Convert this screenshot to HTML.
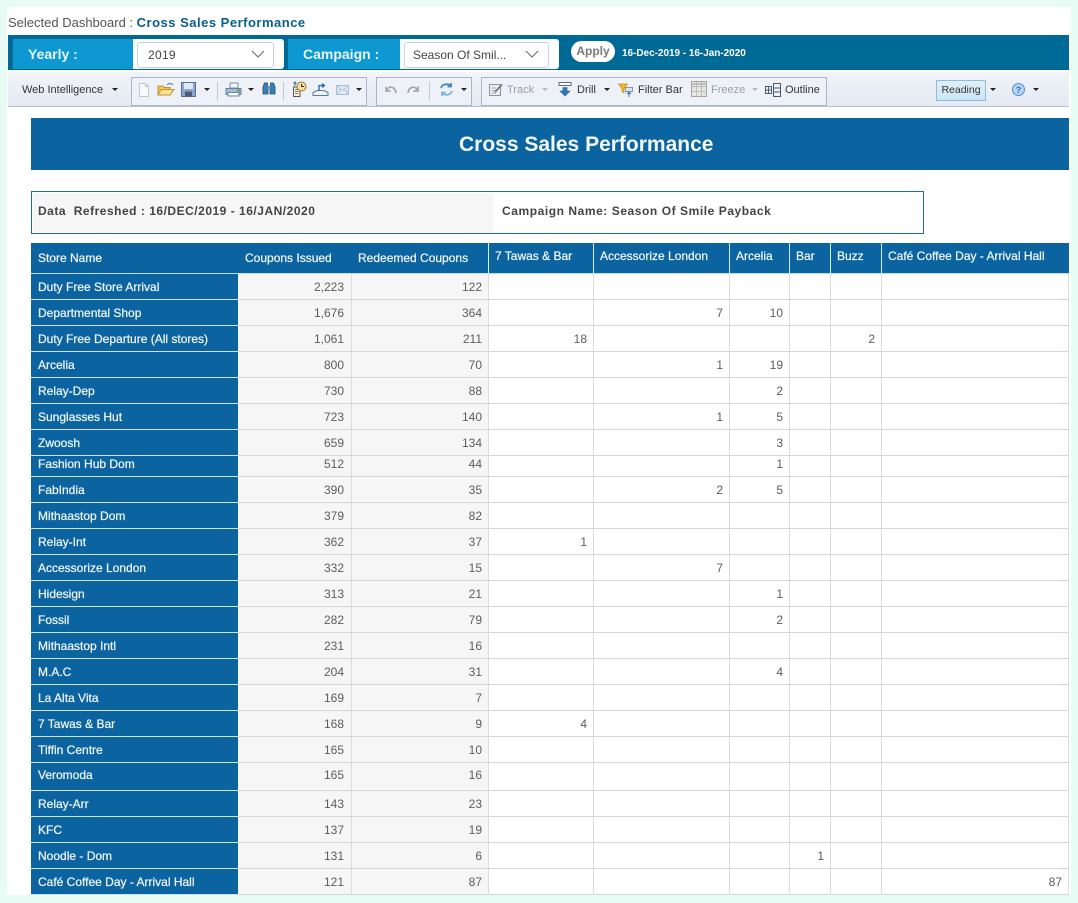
<!DOCTYPE html>
<html><head><meta charset="utf-8"><title>Cross Sales Performance</title>
<style>
*{box-sizing:border-box}
html,body{margin:0;padding:0}
body{width:1078px;height:903px;position:relative;overflow:hidden;background:#e7fcf5;font-family:"Liberation Sans",sans-serif;color:#444}
.a{position:absolute;white-space:nowrap}
.lbl{background:#0d98d2;color:#e8f6fc;font-weight:bold;font-size:14px;line-height:30px}
.sel{background:#fff;border:1px solid #c9d3d8;border-radius:3px;font-size:12px;color:#444;line-height:25px;padding-left:10px;letter-spacing:.3px}
.t{font-size:11px;color:#333;line-height:14px}
.g{color:#9a9fa6}
.grp{border:1px solid #aab6c6;background:#eef1f7;height:29px;top:77px}
.ar{width:0;height:0;border-left:3px solid transparent;border-right:3px solid transparent;border-top:3px solid #222}
.sp{width:1px;height:19px;top:82px;background:#c3cad5}
svg{position:absolute;overflow:visible}
table{position:absolute;left:31px;top:243px;width:1038px;table-layout:fixed;border-collapse:separate;border-spacing:0;font-size:12px;color:#5c5c5c}
th{background:#0b639f;color:#eef5fa;font-weight:normal;text-align:left;height:31px;padding:0 0 0 7px;white-space:nowrap;border-bottom:1px solid #bfdcec;-webkit-text-stroke:.25px #eef5fa;line-height:14px}
th.r{border-left:1px solid #d9ebf5;padding:0 0 5px 6px}
td{height:26px;padding:0 6px 0 0;text-align:right;border-bottom:1px solid #d6d6d6;border-left:1px solid #dcdcdc;line-height:14px;white-space:nowrap}
td:first-child{background:#0b639f;color:#eef5fa;text-align:left;padding-left:7px;border-bottom:1px solid #cfe4f0;border-left:0;-webkit-text-stroke:.25px #eef5fa}
td:nth-child(2),td:nth-child(3){background:#f6f6f6}
td:nth-child(2){padding-right:7px;border-left:0}
td:last-child{border-right:1px solid #dcdcdc;padding-right:6px}
.s td{height:21px;padding-bottom:5px}
.l td{height:28px;padding-bottom:3px}
</style></head>
<body>
<div class="a" style="left:7px;top:7px;width:1064px;height:888px;background:#fff"></div>
<div class="a" style="left:8px;top:15px;font-size:13px;line-height:15px;color:#555">Selected Dashboard : <b style="color:#07608c;letter-spacing:.5px">Cross Sales Performance</b></div>

<div class="a" style="left:8px;top:35px;width:1061px;height:35px;background:#006a96"></div>
<div class="a lbl" style="left:13px;top:39px;width:120px;height:30px;padding-left:15px">Yearly :</div>
<div class="a" style="left:133px;top:39px;width:151px;height:30px;background:#fff;border-radius:0 3px 3px 0"></div>
<div class="a sel" style="left:137px;top:42px;width:137px;height:26px">2019</div>
<svg style="left:251px;top:50px" width="14" height="9"><path d="M1 1L7 7L13 1" fill="none" stroke="#666" stroke-width="1"/></svg>
<div class="a lbl" style="left:288px;top:39px;width:112px;height:30px;padding-left:15px">Campaign :</div>
<div class="a" style="left:400px;top:39px;width:159px;height:30px;background:#fff;border-radius:0 3px 3px 0"></div>
<div class="a sel" style="left:404px;top:42px;width:145px;height:26px;padding-left:8px;letter-spacing:0">Season Of Smil...</div>
<svg style="left:525px;top:50px" width="14" height="9"><path d="M1 1L7 7L13 1" fill="none" stroke="#666" stroke-width="1"/></svg>
<div class="a" style="left:571px;top:41px;width:44px;height:21px;background:#fff;border-radius:11px;text-align:center;font-size:12px;font-weight:bold;color:#7a7a7a;line-height:20px">Apply</div>
<div class="a" style="left:622px;top:48px;font-size:10px;font-weight:bold;color:#fff;line-height:12px;letter-spacing:-.03px">16-Dec-2019 - 16-Jan-2020</div>

<div class="a" style="left:8px;top:72px;width:1061px;height:35px;background:linear-gradient(#f1f4f8,#e4e9f3);border-bottom:1px solid #b9c2ce"></div>
<div class="a t" style="left:22px;top:83px">Web Intelligence</div>
<div class="a ar" style="left:112px;top:88px"></div>

<div class="a grp" style="left:131px;width:236px"></div>
<div class="a grp" style="left:376px;width:96px"></div>
<div class="a grp" style="left:481px;width:346px"></div>

<!-- new -->
<svg style="left:138px;top:83px" width="12" height="14"><path d="M1.500 .5H7.500L10.500 3.500V13.500H1.500Z M7.500 .5V3.500H10.500" fill="#fafafa" stroke="#c4c8cd"/></svg>
<!-- open -->
<svg style="left:157px;top:82px" width="18" height="15"><path d="M1 13V4H6L7.500 5.500H13V13Z" fill="#f2c557" stroke="#c09433"/><path d="M1 13L4 7.500H17L13 13Z" fill="#fbe08c" stroke="#c09433"/><path d="M10 3Q13 0 16 3" fill="none" stroke="#5b93c2" stroke-width="1.200"/></svg>
<!-- save -->
<svg style="left:181px;top:82px" width="15" height="15"><rect x=".5" y=".5" width="14" height="14" fill="#8aa6d2" stroke="#5a6f96"/><rect x="3" y="1" width="9" height="6" fill="#e4e9f0"/><rect x="4" y="9.500" width="7" height="5" fill="#4c5b76"/></svg>
<div class="a ar" style="left:204px;top:88px"></div>
<div class="a sp" style="left:217px"></div>
<!-- print -->
<svg style="left:225px;top:82px" width="17" height="15"><path d="M5 1H13V6H5Z" fill="#f1f4f8" stroke="#8291a5"/><path d="M1 6.500H16V12.500H1Z" fill="#a5bcd8" stroke="#67809e"/><path d="M3 10.500H14V14H3Z" fill="#f6f8fa" stroke="#6f859d"/><rect x="12" y="7.500" width="3" height="2" fill="#5da548"/></svg>
<div class="a ar" style="left:248px;top:88px"></div>
<!-- binoculars -->
<svg style="left:262px;top:82px" width="14" height="14"><path d="M2.500 1H5.500V5H6V12H1V5Z M8.500 1H11.500L13 5V12H8V5H8.500Z" fill="#3a7fb0" stroke="#1f4f78" stroke-width=".8"/><rect x="5.500" y="4" width="3" height="3" fill="#6b97bb"/></svg>
<div class="a sp" style="left:283px"></div>
<!-- schedule -->
<svg style="left:291px;top:81px" width="16" height="17"><path d="M2.500 6H9V15.500H2.500Z" fill="#f7f3df" stroke="#555"/><path d="M4 8.500H7.500M4 10.500H7.500M4 12.500H7.500" stroke="#555" stroke-width=".8"/><circle cx="10.500" cy="5.500" r="4.500" fill="#f6dea0" stroke="#9a7a30"/><path d="M10.500 3V5.500H13" fill="none" stroke="#333"/><path d="M4 5V1M2.500 2.500L4 1L5.500 2.500" fill="none" stroke="#2b6ca3"/></svg>
<!-- publish -->
<svg style="left:312px;top:82px" width="17" height="15"><path d="M1 13.500H16V10.500L12 8.500H5L1 10.500Z" fill="#eef1f6" stroke="#5a7a9a"/><path d="M7 9V3.500H12M10 1.500L12.500 3.500L10 5.500" fill="none" stroke="#2a6a9f" stroke-width="1.300"/></svg>
<!-- mail -->
<svg style="left:336px;top:85px" width="13" height="10"><rect x=".5" y=".5" width="12" height="9" fill="#dfe9f5" stroke="#a8bdd6"/><path d="M.5 .5L6.500 5.500L12.500 .5M.5 9.500L4.500 4M12.500 9.500L8.500 4" fill="none" stroke="#a8bdd6" stroke-width=".8"/></svg>
<div class="a ar" style="left:356px;top:88px"></div>

<!-- undo / redo -->
<svg style="left:384px;top:85px" width="13" height="10"><path d="M2 1.500V6H6.500M2.500 5.500C4.500 .5 11 1 12 8" fill="none" stroke="#a2a7ae" stroke-width="1.700"/></svg>
<svg style="left:407px;top:85px" width="13" height="10"><path d="M11 1.500V6H6.500M10.500 5.500C8.500 .5 2 1 1 8" fill="none" stroke="#a2a7ae" stroke-width="1.700"/></svg>
<div class="a sp" style="left:429px"></div>
<!-- refresh -->
<svg style="left:439px;top:82px" width="15" height="15"><path d="M2 6C3 2 9 1 12 4M12 1V4.500H8.500" fill="none" stroke="#3c85c2" stroke-width="1.700"/><path d="M13 9C12 13 6 14 3 11M3 14V10.500H6.500" fill="none" stroke="#7ab4df" stroke-width="1.700"/></svg>
<div class="a ar" style="left:461px;top:88px"></div>

<!-- track -->
<svg style="left:488px;top:82px" width="16" height="15"><rect x="1.500" y="2.500" width="11" height="11" fill="#eceef1" stroke="#8e9299"/><path d="M3.500 6H8M3.500 8.500H7M3.500 11H8" stroke="#a5a8ae"/><path d="M7 10L14 2.500" stroke="#777" stroke-width="1.800"/></svg>
<div class="a t g" style="left:507px;top:83px">Track</div>
<div class="a ar" style="left:542px;top:88px;border-top-color:#b5bac2"></div>
<!-- drill -->
<svg style="left:558px;top:82px" width="14" height="15"><path d="M1 .5H13V3.500H1Z" fill="#fff" stroke="#5e6a78"/><path d="M5 5.500H9V9H12L7 14L2 9H5Z" fill="#2d78bd" stroke="#1f5c96" stroke-width=".6"/></svg>
<div class="a t" style="left:577px;top:83px">Drill</div>
<div class="a ar" style="left:604px;top:88px"></div>
<!-- filter -->
<svg style="left:618px;top:83px" width="16" height="15"><path d="M.5 1H9.500L6 5.500V10L4 8.500V5.500Z" fill="#f2b92c" stroke="#c58d13" stroke-width=".7"/><rect x="7.500" y="4.500" width="7" height="4" fill="#dce6f2" stroke="#70849b" stroke-width=".8"/><path d="M11 9V14M9 11L11 9L13 11" fill="none" stroke="#3f6f99"/></svg>
<div class="a t" style="left:638px;top:83px">Filter Bar</div>
<!-- freeze -->
<svg style="left:691px;top:81px" width="16" height="16"><rect x=".5" y=".5" width="15" height="15" fill="#e7e4e1" stroke="#a5a5a5"/><path d="M5.500 1V15M10.500 1V15M1 5.500H15M1 10.500H15" stroke="#bdbdbd"/><path d="M1 3H15" stroke="#9c9c9c"/></svg>
<div class="a t g" style="left:711px;top:83px">Freeze</div>
<div class="a ar" style="left:752px;top:88px;border-top-color:#b5bac2"></div>
<!-- outline -->
<svg style="left:765px;top:83px" width="16" height="14"><rect x=".5" y="3.500" width="6" height="7" fill="none" stroke="#4c5d72"/><path d="M1 7H6M3.500 4V10" stroke="#4c5d72"/><rect x="8.500" y=".5" width="7" height="13" fill="none" stroke="#4c5d72"/><path d="M9 5H15M9 9H15" stroke="#4c5d72"/></svg>
<div class="a t" style="left:785px;top:83px">Outline</div>

<div class="a" style="left:936px;top:80px;width:50px;height:21px;background:linear-gradient(#dff0fa,#cce6f5);border:1px solid #8fbcd8;text-align:center;font-size:10.5px;line-height:18px;color:#333">Reading</div>
<div class="a ar" style="left:990px;top:88px"></div>
<svg style="left:1012px;top:83px" width="13" height="13"><circle cx="6.500" cy="6.500" r="6" fill="#b9d5f2" stroke="#4d8fd6"/><text x="6.500" y="10" font-size="9" font-weight="bold" text-anchor="middle" fill="#2f74c0" font-family="Liberation Sans">?</text></svg>
<div class="a ar" style="left:1033px;top:88px"></div>

<div class="a" style="left:31px;top:118px;width:1038px;height:52px;background:#0b639f;color:#f2f8fc;font-size:21px;font-weight:bold;line-height:54px;padding-left:428px">Cross Sales Performance</div>

<div class="a" style="left:31px;top:191px;width:893px;height:43px;border:1px solid #1a6f98;background:#fff"></div>
<div class="a" style="left:33px;top:193px;width:461px;height:39px;background:#f6f6f6"></div>
<div class="a" style="left:38px;top:204px;font-size:12px;font-weight:bold;color:#444;line-height:15px;letter-spacing:.51px;white-space:pre">Data  Refreshed : 16/DEC/2019 - 16/JAN/2020</div>
<div class="a" style="left:502px;top:204px;font-size:12px;font-weight:bold;color:#444;line-height:15px;letter-spacing:.56px">Campaign Name: Season Of Smile Payback</div>

<table>
<colgroup><col style="width:207px"><col style="width:113px"><col style="width:137px"><col style="width:105px"><col style="width:136px"><col style="width:60px"><col style="width:41px"><col style="width:51px"><col style="width:188px"></colgroup>
<tr><th>Store Name</th><th>Coupons Issued</th><th>Redeemed Coupons</th><th class="r">7 Tawas &amp; Bar</th><th class="r">Accessorize London</th><th class="r">Arcelia</th><th class="r">Bar</th><th class="r">Buzz</th><th class="r">Café Coffee Day - Arrival Hall</th></tr>
<tr><td>Duty Free Store Arrival</td><td>2,223</td><td>122</td><td></td><td></td><td></td><td></td><td></td><td></td></tr>
<tr><td>Departmental Shop</td><td>1,676</td><td>364</td><td></td><td>7</td><td>10</td><td></td><td></td><td></td></tr>
<tr><td>Duty Free Departure (All stores)</td><td>1,061</td><td>211</td><td>18</td><td></td><td></td><td></td><td>2</td><td></td></tr>
<tr><td>Arcelia</td><td>800</td><td>70</td><td></td><td>1</td><td>19</td><td></td><td></td><td></td></tr>
<tr><td>Relay-Dep</td><td>730</td><td>88</td><td></td><td></td><td>2</td><td></td><td></td><td></td></tr>
<tr><td>Sunglasses Hut</td><td>723</td><td>140</td><td></td><td>1</td><td>5</td><td></td><td></td><td></td></tr>
<tr><td>Zwoosh</td><td>659</td><td>134</td><td></td><td></td><td>3</td><td></td><td></td><td></td></tr>
<tr class="s"><td>Fashion Hub Dom</td><td>512</td><td>44</td><td></td><td></td><td>1</td><td></td><td></td><td></td></tr>
<tr><td>FabIndia</td><td>390</td><td>35</td><td></td><td>2</td><td>5</td><td></td><td></td><td></td></tr>
<tr><td>Mithaastop Dom</td><td>379</td><td>82</td><td></td><td></td><td></td><td></td><td></td><td></td></tr>
<tr><td>Relay-Int</td><td>362</td><td>37</td><td>1</td><td></td><td></td><td></td><td></td><td></td></tr>
<tr><td>Accessorize London</td><td>332</td><td>15</td><td></td><td>7</td><td></td><td></td><td></td><td></td></tr>
<tr><td>Hidesign</td><td>313</td><td>21</td><td></td><td></td><td>1</td><td></td><td></td><td></td></tr>
<tr><td>Fossil</td><td>282</td><td>79</td><td></td><td></td><td>2</td><td></td><td></td><td></td></tr>
<tr><td>Mithaastop Intl</td><td>231</td><td>16</td><td></td><td></td><td></td><td></td><td></td><td></td></tr>
<tr><td>M.A.C</td><td>204</td><td>31</td><td></td><td></td><td>4</td><td></td><td></td><td></td></tr>
<tr><td>La Alta Vita</td><td>169</td><td>7</td><td></td><td></td><td></td><td></td><td></td><td></td></tr>
<tr><td>7 Tawas &amp; Bar</td><td>168</td><td>9</td><td>4</td><td></td><td></td><td></td><td></td><td></td></tr>
<tr><td>Tiffin Centre</td><td>165</td><td>10</td><td></td><td></td><td></td><td></td><td></td><td></td></tr>
<tr class="l"><td>Veromoda</td><td>165</td><td>16</td><td></td><td></td><td></td><td></td><td></td><td></td></tr>
<tr><td>Relay-Arr</td><td>143</td><td>23</td><td></td><td></td><td></td><td></td><td></td><td></td></tr>
<tr><td>KFC</td><td>137</td><td>19</td><td></td><td></td><td></td><td></td><td></td><td></td></tr>
<tr><td>Noodle - Dom</td><td>131</td><td>6</td><td></td><td></td><td></td><td>1</td><td></td><td></td></tr>
<tr><td>Café Coffee Day - Arrival Hall</td><td>121</td><td>87</td><td></td><td></td><td></td><td></td><td></td><td>87</td></tr>
</table>
</body></html>
